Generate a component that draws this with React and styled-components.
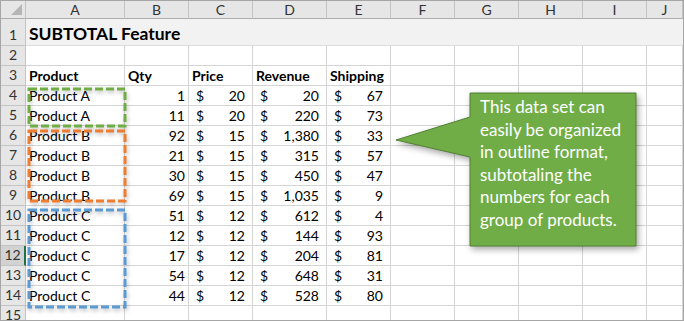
import React from 'react'
import styled, { createGlobalStyle } from 'styled-components'

const GlobalStyle = createGlobalStyle`
    html, body {
        margin: 0;
        padding: 0;
        background: #ffffff;
    }
    body {
        font-family: Lato, "Open Sans", sans-serif;
    }
`

const columns = ['A', 'B', 'C', 'D', 'E', 'F', 'G', 'H', 'I', 'J']

const data = [
    ['Product A', 1, 20, '20', 67],
    ['Product A', 11, 20, '220', 73],
    ['Product B', 92, 15, '1,380', 33],
    ['Product B', 21, 15, '315', 57],
    ['Product B', 30, 15, '450', 47],
    ['Product B', 69, 15, '1,035', 9],
    ['Product C', 51, 12, '612', 4],
    ['Product C', 12, 12, '144', 93],
    ['Product C', 17, 12, '204', 81],
    ['Product C', 54, 12, '648', 31],
    ['Product C', 44, 12, '528', 80],
]

const groups = [
    { color: '#70ad47', x: 27.5, y: 87.5, w: 96, h: 37 },
    { color: '#ed7d31', x: 28, y: 130, w: 96, h: 70 },
    { color: '#5b9bd5', x: 28, y: 209, w: 96, h: 97 },
]

const calloutLines = [
    'This data set can',
    'easily be organized',
    'in outline format,',
    'subtotaling the',
    'numbers for each',
    'group of products.',
]

function App() {
    const rows = []
    // row 2 blank, row 3 headings, rows 4-14 data, row 15 blank
    rows.push({ n: 2, cells: [] })
    rows.push({ n: 3, cells: ['Product', 'Qty', 'Price', 'Revenue', 'Shipping'], heading: true })
    data.forEach((r, i) => rows.push({ n: i + 4, cells: r }))
    rows.push({ n: 15, cells: [] })

    return (
        <>
            <GlobalStyle />
            <Frame>
                <Sheet>
                    <Corner />
                    {columns.map(c => <ColHead key={c}>{c}</ColHead>)}

                    <RowHead>1</RowHead>
                    <TitleCell>SUBTOTAL Feature</TitleCell>

                    {rows.map(row => (
                        <React.Fragment key={row.n}>
                            <RowHead $selected={row.n === 12}>{row.n}</RowHead>
                            {columns.map((c, ci) => {
                                const v = row.cells[ci]
                                if (v === undefined) return <Cell key={c} />
                                if (row.heading) return <Cell key={c} $bold>{v}</Cell>
                                if (ci === 0) return <Cell key={c}>{v}</Cell>
                                if (ci === 1) return <Cell key={c} $right>{v}</Cell>
                                return (
                                    <Cell key={c} $money>
                                        <span>$</span>
                                        <span>{v}</span>
                                    </Cell>
                                )
                            })}
                        </React.Fragment>
                    ))}
                </Sheet>

                {groups.map(g => (
                    <DashBox key={g.color} $x={g.x - 2} $y={g.y - 2} width={g.w + 4} height={g.h + 4}>
                        <rect x="2" y="2" width={g.w} height={g.h} fill="none" stroke={g.color} strokeWidth="3" strokeDasharray="8 3" />
                    </DashBox>
                ))}

                <Callout>
                    <CalloutShape width="244" height="158" viewBox="0 0 244 158">
                        <path d="M75 1 H241 V154 H75 V65 L1 48 L75 25 Z" fill="#70ad47" stroke="#507e32" strokeWidth="1" />
                    </CalloutShape>
                    <CalloutText>
                        {calloutLines.map(l => <span key={l}>{l}</span>)}
                    </CalloutText>
                </Callout>
            </Frame>
        </>
    )
}

const Frame = styled.div`
    position: relative;
    width: 684px;
    height: 321px;
    box-sizing: border-box;
    border: 1px solid #a6a6a6;
    overflow: hidden;
    background: #ffffff;
`

const Sheet = styled.div`
    display: grid;
    grid-template-columns: 25px 99px 64px 64px 74px 64px 64px 64px 64px 64px 1fr;
    grid-template-rows: 18px 27px repeat(13, 20px) 1fr;
    height: 100%;
    font-family: Lato, "Open Sans", sans-serif;
    font-size: 14px;
    color: #000000;
`

const Corner = styled.div`
    position: relative;
    background: #e6e6e6;
    border-right: 1px solid #c4c4c4;
    border-bottom: 1px solid #adadad;

    &::after {
        content: '';
        position: absolute;
        right: 3px;
        bottom: 3px;
        border-style: solid;
        border-width: 0 0 11px 11px;
        border-color: transparent transparent #b5b5b5 transparent;
    }
`

const ColHead = styled.div`
    display: flex;
    align-items: center;
    justify-content: center;
    background: #e6e6e6;
    border-right: 1px solid #c4c4c4;
    border-bottom: 1px solid #adadad;
    color: #333333;
    font-size: 14px;
    overflow: hidden;
`

const RowHead = styled.div`
    display: flex;
    align-items: flex-end;
    justify-content: center;
    padding-bottom: 2px;
    box-sizing: border-box;
    background: ${p => (p.$selected ? '#d2d2d2' : '#e6e6e6')};
    border-right: ${p => (p.$selected ? '2px solid #217346' : '1px solid #c4c4c4')};
    border-bottom: 1px solid #c4c4c4;
    color: #333333;
    font-size: 14px;
`

const TitleCell = styled.div`
    grid-column: 2 / -1;
    display: flex;
    align-items: flex-end;
    padding: 0 0 1px 3px;
    box-sizing: border-box;
    background: #f2f2f2;
    border-bottom: 1px solid #dcdcdc;
    font-size: 17.5px;
    font-weight: 700;
`

const Cell = styled.div`
    display: flex;
    align-items: flex-end;
    justify-content: ${p => (p.$money ? 'space-between' : p.$right ? 'flex-end' : 'flex-start')};
    padding: ${p => (p.$money ? '0 7px 1px 7px' : '0 3px 1px 3px')};
    box-sizing: border-box;
    border-right: 1px solid #d4d4d4;
    border-bottom: 1px solid #d4d4d4;
    font-weight: ${p => (p.$bold ? 700 : 400)};
    white-space: nowrap;
    overflow: hidden;
`

const DashBox = styled.svg`
    position: absolute;
    left: ${p => p.$x}px;
    top: ${p => p.$y}px;
    overflow: visible;
    filter: drop-shadow(1px 2px 2px rgba(0, 0, 0, 0.28));
`

const Callout = styled.div`
    position: absolute;
    left: 394px;
    top: 91px;
    width: 244px;
    height: 158px;
`

const CalloutShape = styled.svg`
    position: absolute;
    left: 0;
    top: 0;
    filter: drop-shadow(2px 3px 3px rgba(0, 0, 0, 0.35));
`

const CalloutText = styled.div`
    position: relative;
    display: flex;
    flex-direction: column;
    padding: 4px 0 0 85px;
    color: #ffffff;
    font-family: Lato, "Open Sans", sans-serif;
    font-size: 17px;
    line-height: 22.6px;
    white-space: nowrap;
`

export default App
